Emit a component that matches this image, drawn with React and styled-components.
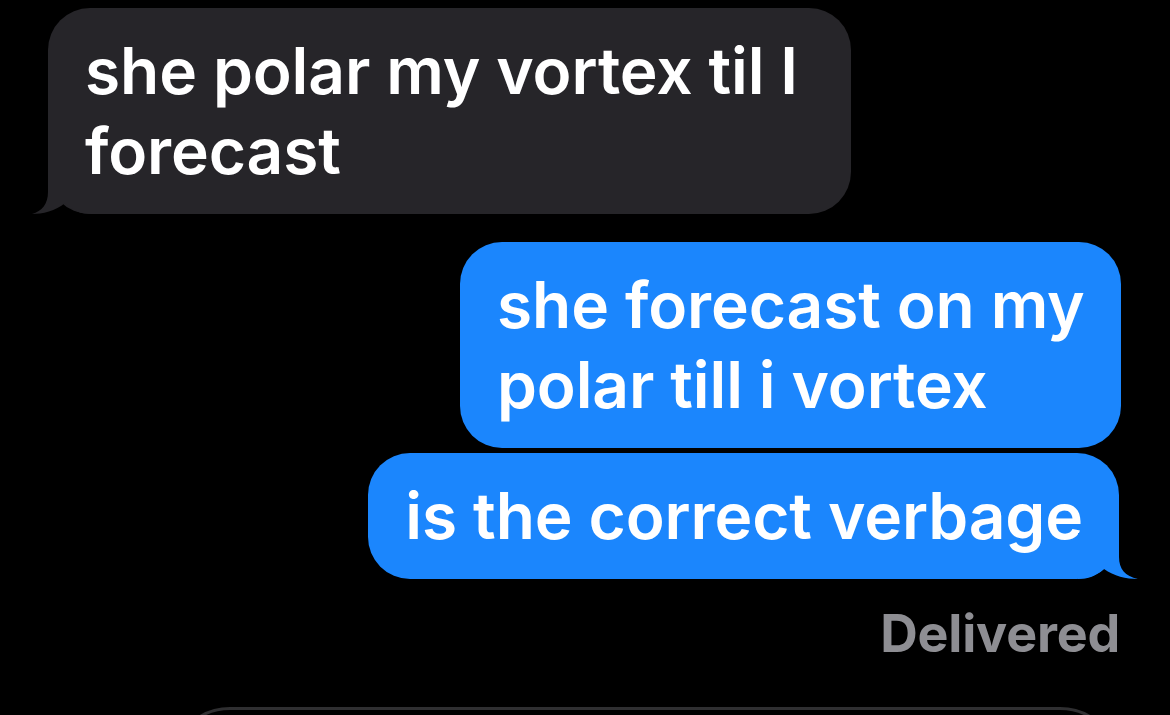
import React from "react";
import styled, { createGlobalStyle } from "styled-components";

const Global = createGlobalStyle`
  html, body {
    margin: 0;
    padding: 0;
    background: #000;
    height: 715px;
    overflow: hidden;
  }
  * { box-sizing: border-box; }
`;

const Thread = styled.div`
  display: flex;
  flex-direction: column;
  padding: 8px 49px 0 48px;
  font-family: Inter, "Noto Sans", sans-serif;
  -webkit-font-smoothing: antialiased;
`;

const Row = styled.div`
  display: flex;
  justify-content: ${(p) => (p.$out ? "flex-end" : "flex-start")};
  margin-top: ${(p) => p.$gap || 0}px;
  margin-right: ${(p) => p.$shift || 0}px;
`;

const Bubble = styled.div`
  position: relative;
  max-width: ${(p) => p.$max}px;
  padding: 23px ${(p) => p.$pr || 38}px 23px 37px;
  border-radius: 42px;
  background: ${(p) => (p.$out ? "#1b86fd" : "#262529")};
  color: #fff;
  font-size: 64px;
  font-weight: 600;
  line-height: 80px;
  letter-spacing: -0.1px;
`;

const TailSvg = styled.svg`
  position: absolute;
  bottom: 0;
  width: 60px;
  height: 46px;
  ${(p) => (p.$side === "left" ? "left: -16px;" : "right: -19px;")}
  overflow: visible;
`;

function Tail({ side, color }) {
  const d =
    side === "left"
      ? "M16,0 L16,24 C16,36 10,43 0,46 C10,46 24,43 33,35 C40,43 50,46 60,46 L60,0 Z"
      : "M41,0 L41,24 C41,36 47,43 60,46 C48,46 36,43 26,36 C18,43 10,46 0,46 L0,0 Z";
  return (
    <TailSvg $side={side} viewBox="0 0 60 46" aria-hidden="true">
      <path d={d} fill={color} />
    </TailSvg>
  );
}

const Status = styled.div`
  align-self: flex-end;
  margin-top: 26px;
  margin-right: 1px;
  color: #8e8e93;
  font-size: 52px;
  font-weight: 700;
  line-height: 58px;
  letter-spacing: -0.2px;
`;

const InputField = styled.div`
  margin: 44px 1px 0 122px;
  height: 120px;
  border: 3px solid #2f2f31;
  border-radius: 70px;
`;

export default function App() {
  return (
    <>
      <Global />
      <Thread>
        <Row>
          <Bubble $max={803} $pr={40}>
            she polar my vortex til I forecast
            <Tail side="left" color="#262529" />
          </Bubble>
        </Row>
        <Row $out $gap={28}>
          <Bubble $out $max={661} $pr={20}>
            she forecast on my polar till i vortex
          </Bubble>
        </Row>
        <Row $out $gap={5} $shift={2}>
          <Bubble $out $max={760} $pr={36}>
            is the correct verbage
            <Tail side="right" color="#1b86fd" />
          </Bubble>
        </Row>
        <Status>Delivered</Status>
        <InputField />
      </Thread>
    </>
  );
}
